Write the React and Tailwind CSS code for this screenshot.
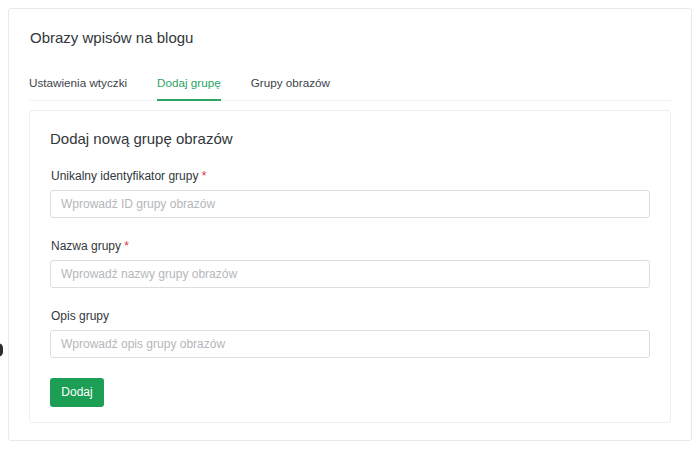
import React from 'react';

const fields = [
  { label: 'Unikalny identyfikator grupy', required: true, placeholder: 'Wprowadź ID grupy obrazów' },
  { label: 'Nazwa grupy', required: true, placeholder: 'Wprowadź nazwy grupy obrazów' },
  { label: 'Opis grupy', required: false, placeholder: 'Wprowadź opis grupy obrazów' },
];

const tabs = ['Ustawienia wtyczki', 'Dodaj grupę', 'Grupy obrazów'];

const App = () => {
  return (
    <div
      className="relative w-[700px] h-[450px] bg-white overflow-hidden p-2 pr-[8px]"
      style={{ fontFamily: '"Liberation Sans", Arial, sans-serif' }}
    >
      {/* partial dot at the left edge */}
      <div className="absolute left-[-7px] top-[343px] w-[10px] h-[14px] rounded-full bg-[#2e2e2e]"></div>

      <div className="w-[684px] border border-[#e8e9ee] rounded-[3px] px-5 pt-[18px] pb-[17px]">
        <h1 className="text-[15px] leading-[22px] text-[#32373c] pl-[1px]">Obrazy wpisów na blogu</h1>

        {/* Tabs */}
        <div className="mt-[25px] flex gap-[30px] border-b border-[#eef0f4]">
          {tabs.map((tab, i) => (
            <div
              key={tab}
              className={
                i === 1
                  ? 'text-[11.7px] leading-[18px] pb-[7px] text-[#2aa564] border-b-2 border-[#2aa564] -mb-[1px]'
                  : 'text-[11.7px] leading-[18px] pb-[7px] text-[#3c434a] border-b-2 border-transparent -mb-[1px]'
              }
            >
              {tab}
            </div>
          ))}
        </div>

        {/* Form card */}
        <div className="mt-[9px] border border-[#eceef2] rounded-[3px] px-5 pt-[16px] pb-[15px]">
          <h2 className="text-[15px] leading-[24px] text-[#32373c]">Dodaj nową grupę obrazów</h2>

          <div className="mt-[17px] flex flex-col gap-[20px]">
            {fields.map((f) => (
              <div key={f.label}>
                <label className="block text-[12px] leading-[16px] text-[#32373c] pl-[1px] mb-[6px]">
                  {f.label}
                  {f.required && <span className="text-[#dc3545]"> *</span>}
                </label>
                <input
                  type="text"
                  placeholder={f.placeholder}
                  className="block w-full h-[28px] border border-[#dcdde1] rounded-[3px] px-[10px] text-[12px] text-[#32373c] placeholder:text-[#b4b7bb] bg-white outline-none"
                />
              </div>
            ))}
          </div>

          <button className="mt-[20px] h-[29px] w-[54px] rounded-[3px] bg-[#1c9e55] text-white text-[12px] leading-[29px]">
            Dodaj
          </button>
        </div>
      </div>
    </div>
  );
};

export default App;
